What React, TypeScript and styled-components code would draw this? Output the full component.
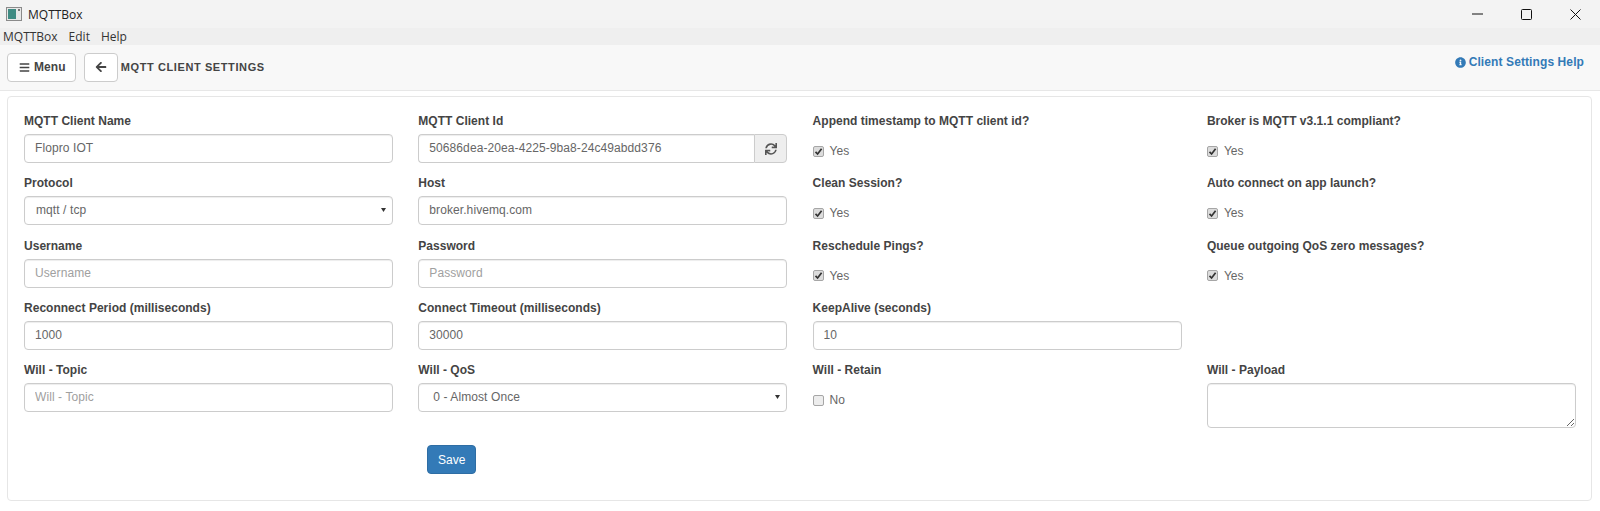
import React from "react";
import styled, { createGlobalStyle } from "styled-components";
import { FaArrowLeft, FaBars, FaInfoCircle, FaSync } from "react-icons/fa";

const GlobalStyle = createGlobalStyle`
  html, body {
    margin: 0;
    padding: 0;
    background: #fff;
    font-family: "Liberation Sans", Arial, sans-serif;
    font-size: 13px;
    color: #333;
  }
  * { box-sizing: border-box; }
`;

const TitleBar = styled.div`
  height: 28px;
  background: #f3f3f3;
  display: flex;
  align-items: center;
  padding-left: 6px;
`;

const AppIcon = styled.svg`
  width: 16px;
  height: 14px;
  margin-right: 6px;
`;

const AppName = styled.span`
  font-family: "Open Sans", sans-serif;
  font-size: 12px;
  color: #222;
`;

const WindowControls = styled.div`
  margin-left: auto;
  display: flex;
  align-items: center;
`;

const WindowButton = styled.div`
  width: 49px;
  height: 24px;
  display: flex;
  align-items: center;
  justify-content: center;
  svg { display: block; }
`;

const MenuBar = styled.div`
  height: 17px;
  background: #efefef;
  display: flex;
  align-items: center;
  gap: 11px;
  padding-left: 3px;
  font-family: "Open Sans", sans-serif;
  font-size: 12px;
  color: #333;
`;

const NavBar = styled.div`
  height: 46px;
  background: #f8f8f8;
  border-bottom: 1px solid #e7e7e7;
  display: flex;
  align-items: center;
  padding: 0 16px 0 7px;
`;

const NavButton = styled.button`
  height: 29px;
  padding: 0 9px 0 11px;
  background: #fff;
  border: 1px solid #ccc;
  border-radius: 4px;
  color: #444;
  font-family: inherit;
  font-size: 12px;
  font-weight: 700;
  letter-spacing: 0.1px;
  display: flex;
  align-items: center;
  gap: 4px;
  margin-right: 8px;
  margin-top: -1px;
`;

const BackButton = styled(NavButton)`
  width: 34px;
  padding: 0;
  justify-content: center;
  margin-right: 3px;
`;

const PageTitle = styled.span`
  font-size: 11px;
  font-weight: 700;
  letter-spacing: 0.6px;
  color: #444;
  margin-top: -2px;
`;

const HelpLink = styled.a`
  margin-left: auto;
  margin-top: -11px;
  color: #337ab7;
  font-size: 12px;
  font-weight: 700;
  letter-spacing: 0.1px;
  display: flex;
  align-items: center;
  gap: 3px;
`;

const Panel = styled.div`
  margin: 5px 8px 0 7px;
  height: 405px;
  border: 1px solid #e6e6e6;
  border-radius: 4px;
  padding: 15px 16px 0;
`;

const FormGrid = styled.div`
  display: grid;
  grid-template-columns: repeat(4, 369px);
  column-gap: 25.3px;
  grid-template-rows: repeat(4, 62.3px) 74px 50px;
`;

const Field = styled.div`
  display: flex;
  flex-direction: column;
  min-width: 0;
`;

const Label = styled.label`
  font-size: 12px;
  font-weight: 700;
  line-height: 18px;
  height: 22px;
  letter-spacing: 0.02px;
  color: #444;
`;

const Input = styled.input`
  width: 100%;
  height: 29px;
  padding: 0 10px 1px;
  border: 1px solid #ccc;
  border-radius: 4px;
  background: #fff;
  box-shadow: inset 0 1px 1px rgba(0, 0, 0, 0.075);
  font-family: inherit;
  font-size: 12px;
  letter-spacing: 0.09px;
  color: #666;
  outline: none;
  &::placeholder { color: #a0a0a0; opacity: 1; }
`;

const InputGroup = styled.div`
  display: flex;
  ${Input} {
    border-radius: 4px 0 0 4px;
    border-right: 0;
  }
`;

const AddOn = styled.span`
  width: 33px;
  flex: none;
  border: 1px solid #ccc;
  border-radius: 0 4px 4px 0;
  background: #eee;
  color: #555;
  display: flex;
  align-items: center;
  justify-content: center;
`;

const SelectWrap = styled.div`
  position: relative;
  height: 29px;
`;

const Select = styled.select<{ $indent: number }>`
  width: 100%;
  height: 29px;
  padding: 0 10px 1px ${(p) => p.$indent}px;
  border: 1px solid #ccc;
  border-radius: 4px;
  background: #fff;
  box-shadow: inset 0 1px 1px rgba(0, 0, 0, 0.075);
  font-family: inherit;
  font-size: 12px;
  letter-spacing: 0.09px;
  color: #666;
  appearance: none;
  outline: none;
`;

const Caret = styled.svg`
  position: absolute;
  right: 7px;
  top: 12px;
  width: 5px;
  height: 4px;
`;

const CheckRow = styled.div`
  display: flex;
  align-items: center;
  height: 33px;
  gap: 6px;
  font-size: 12px;
  color: #666;
  padding-top: 1px;
`;

const Box = styled.span<{ $checked: boolean }>`
  width: 11px;
  height: 11px;
  flex: none;
  border: 1px solid #a6a6a6;
  border-radius: 2px;
  background: ${(p) => (p.$checked ? "#dcdcdc" : "#ededed")};
  display: flex;
  align-items: center;
  justify-content: center;
`;

const PayloadArea = styled.textarea`
  width: 100%;
  height: 45px;
  padding: 6px 10px;
  border: 1px solid #ccc;
  border-radius: 4px;
  box-shadow: inset 0 1px 1px rgba(0, 0, 0, 0.075);
  outline: none;
  resize: vertical;
`;

const SaveCell = styled.div`
  grid-column: 2;
  padding-left: 9px;
  padding-top: 10px;
`;

const SaveButton = styled.button`
  width: 49px;
  height: 29px;
  background: #337ab7;
  border: 1px solid #2e6da4;
  border-radius: 4px;
  color: #fff;
  font-family: inherit;
  font-size: 12px;
  padding: 0;
`;

const Spacer = styled.div``;

function Check({ label, checked = true }: { label: string; checked?: boolean }) {
  return (
    <CheckRow>
      <Box $checked={checked}>
        {checked && (
          <svg width="9" height="9" viewBox="0 0 9 9">
            <path d="M1.5 4.8 L3.6 7 L7.6 1.8" fill="none" stroke="#333" strokeWidth="1.7" />
          </svg>
        )}
      </Box>
      {label}
    </CheckRow>
  );
}

function TextField({ label, value, placeholder }: { label: string; value?: string; placeholder?: string }) {
  return (
    <Field>
      <Label>{label}</Label>
      <Input defaultValue={value} placeholder={placeholder} />
    </Field>
  );
}

function SelectField({ label, options, indent }: { label: string; options: string[]; indent: number }) {
  return (
    <Field>
      <Label>{label}</Label>
      <SelectWrap>
        <Select $indent={indent}>
          {options.map((o) => (
            <option key={o}>{o}</option>
          ))}
        </Select>
        <Caret viewBox="0 0 5 4">
          <path d="M0 0 H5 L2.5 4 Z" fill="#333" />
        </Caret>
      </SelectWrap>
    </Field>
  );
}

function CheckField({ label, value, checked }: { label: string; value: string; checked?: boolean }) {
  return (
    <Field>
      <Label>{label}</Label>
      <Check label={value} checked={checked} />
    </Field>
  );
}

export default function App() {
  return (
    <>
      <GlobalStyle />
      <TitleBar>
        <AppIcon viewBox="0 0 16 14">
          <rect x="0.5" y="0.5" width="15" height="13" fill="#e8e8e8" stroke="#8a8a8a" />
          <rect x="2" y="2" width="8" height="10" fill="#3f8b83" />
          <rect x="12" y="2" width="2" height="2" fill="#777" />
        </AppIcon>
        <AppName>MQTTBox</AppName>
        <WindowControls>
          <WindowButton>
            <svg width="11" height="2" viewBox="0 0 11 2">
              <path d="M0 1 H11" stroke="#111" strokeWidth="1" />
            </svg>
          </WindowButton>
          <WindowButton>
            <svg width="11" height="11" viewBox="0 0 11 11">
              <rect x="0.5" y="0.5" width="10" height="10" rx="1" fill="none" stroke="#111" />
            </svg>
          </WindowButton>
          <WindowButton>
            <svg width="11" height="11" viewBox="0 0 11 11">
              <path d="M0.5 0.5 L10.5 10.5 M10.5 0.5 L0.5 10.5" stroke="#111" strokeWidth="1" />
            </svg>
          </WindowButton>
        </WindowControls>
      </TitleBar>
      <MenuBar>
        <span>MQTTBox</span>
        <span>Edit</span>
        <span>Help</span>
      </MenuBar>
      <NavBar>
        <NavButton>
          <FaBars size={11} />
          Menu
        </NavButton>
        <BackButton>
          <FaArrowLeft size={12} />
        </BackButton>
        <PageTitle>MQTT CLIENT SETTINGS</PageTitle>
        <HelpLink>
          <FaInfoCircle size={11} />
          Client Settings Help
        </HelpLink>
      </NavBar>
      <Panel>
        <FormGrid>
          <TextField label="MQTT Client Name" value="Flopro IOT" />
          <Field>
            <Label>MQTT Client Id</Label>
            <InputGroup>
              <Input defaultValue="50686dea-20ea-4225-9ba8-24c49abdd376" />
              <AddOn>
                <FaSync size={12} />
              </AddOn>
            </InputGroup>
          </Field>
          <CheckField label="Append timestamp to MQTT client id?" value="Yes" />
          <CheckField label="Broker is MQTT v3.1.1 compliant?" value="Yes" />

          <SelectField label="Protocol" options={["mqtt / tcp"]} indent={11} />
          <TextField label="Host" value="broker.hivemq.com" />
          <CheckField label="Clean Session?" value="Yes" />
          <CheckField label="Auto connect on app launch?" value="Yes" />

          <TextField label="Username" placeholder="Username" />
          <TextField label="Password" placeholder="Password" />
          <CheckField label="Reschedule Pings?" value="Yes" />
          <CheckField label="Queue outgoing QoS zero messages?" value="Yes" />

          <TextField label="Reconnect Period (milliseconds)" value="1000" />
          <TextField label="Connect Timeout (milliseconds)" value="30000" />
          <TextField label="KeepAlive (seconds)" value="10" />
          <Spacer />

          <TextField label="Will - Topic" placeholder="Will - Topic" />
          <SelectField label="Will - QoS" options={["0 - Almost Once"]} indent={14} />
          <CheckField label="Will - Retain" value="No" checked={false} />
          <Field>
            <Label>Will - Payload</Label>
            <PayloadArea />
          </Field>

          <SaveCell>
            <SaveButton>Save</SaveButton>
          </SaveCell>
        </FormGrid>
      </Panel>
    </>
  );
}
